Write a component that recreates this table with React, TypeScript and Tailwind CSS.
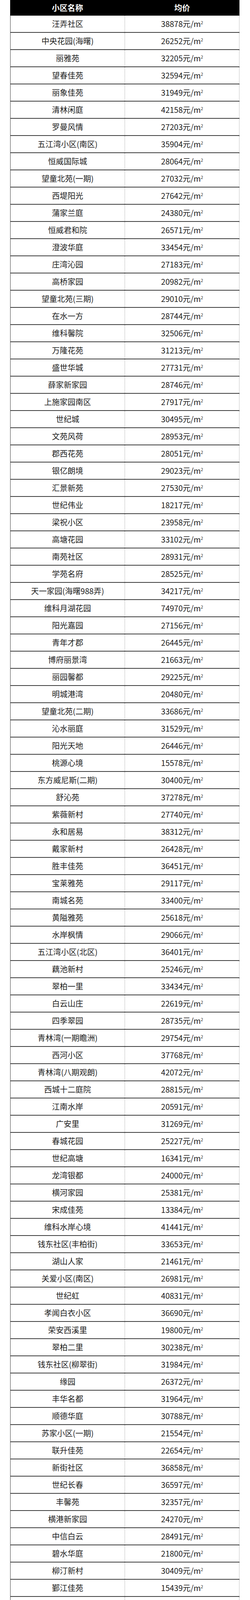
const rows: [string, number][] = [
  ["汪弄社区", 38878],
  ["中央花园(海曙)", 26252],
  ["丽雅苑", 32205],
  ["望春佳苑", 32594],
  ["丽象佳苑", 31949],
  ["清林闲庭", 42158],
  ["罗曼风情", 27203],
  ["五江湾小区(南区)", 35904],
  ["恒威国际城", 28064],
  ["望童北苑(一期)", 27032],
  ["西堤阳光", 27642],
  ["蒲家兰庭", 24380],
  ["恒威君和院", 26571],
  ["澄波华庭", 33454],
  ["庄湾沁园", 27183],
  ["高桥家园", 20982],
  ["望童北苑(三期)", 29010],
  ["在水一方", 28744],
  ["维科馨院", 32506],
  ["万隆花苑", 31213],
  ["盛世华城", 27731],
  ["薛家新家园", 28746],
  ["上施家园南区", 27917],
  ["世纪城", 30495],
  ["文苑风荷", 28953],
  ["郡西花苑", 28051],
  ["银亿朗境", 29023],
  ["汇景新苑", 27530],
  ["世纪伟业", 18217],
  ["梁祝小区", 23958],
  ["高塘花园", 33102],
  ["南苑社区", 28931],
  ["学苑名府", 28525],
  ["天一家园(海曙988弄)", 34217],
  ["维科月湖花园", 74970],
  ["阳光嘉园", 27156],
  ["青年才郡", 26445],
  ["博府丽景湾", 21663],
  ["丽园馨都", 29225],
  ["明城港湾", 20480],
  ["望童北苑(二期)", 33686],
  ["沁水丽庭", 31529],
  ["阳光天地", 26446],
  ["桃源心境", 15578],
  ["东方威尼斯(二期)", 30400],
  ["舒沁苑", 37278],
  ["紫薇新村", 27740],
  ["永和居易", 38312],
  ["戴家新村", 26428],
  ["胜丰佳苑", 36451],
  ["宝莱雅苑", 29117],
  ["南城名苑", 33400],
  ["黄隘雅苑", 25618],
  ["水岸枫情", 29066],
  ["五江湾小区(北区)", 36401],
  ["藕池新村", 25246],
  ["翠柏一里", 33434],
  ["白云山庄", 22619],
  ["四季翠园", 28735],
  ["青林湾(一期瞻洲)", 29754],
  ["西河小区", 37768],
  ["青林湾(八期观朗)", 42072],
  ["西城十二庭院", 28815],
  ["江南水岸", 20591],
  ["广安里", 31269],
  ["春城花园", 25227],
  ["世纪高塘", 16341],
  ["龙湾银都", 24000],
  ["横河家园", 25381],
  ["宋成佳苑", 13384],
  ["维科水岸心境", 41441],
  ["钱东社区(丰柏街)", 33653],
  ["湖山人家", 21461],
  ["关爱小区(南区)", 26981],
  ["世纪虹", 40831],
  ["孝闻白衣小区", 36690],
  ["荣安西溪里", 19800],
  ["翠柏二里", 30238],
  ["钱东社区(柳翠街)", 31984],
  ["缘园", 26372],
  ["丰华名都", 31964],
  ["顺德华庭", 30788],
  ["苏家小区(一期)", 21554],
  ["联升佳苑", 22654],
  ["新街社区", 36858],
  ["世纪长春", 36597],
  ["丰馨苑", 32357],
  ["横港新家园", 24270],
  ["中信白云", 28491],
  ["碧水华庭", 21800],
  ["柳汀新村", 30409],
  ["鄞江佳苑", 15439],
  ["柳馨花园", 27722],
  ["西湾小区(48弄)", 33015],
  ["西河花园", 28999],
  ["荣安佳境", 28724],
  ["菱池小区", 35106],
  ["盛世郦都(北区)", 22233],
  ["葑盛昉", 26724],
  ["青林湾(六期观瀚)", 40691],
];

export default function App() {
  return (
    <div className="h-[4441px] overflow-hidden bg-white font-['Noto_Sans_CJK_SC',sans-serif] leading-none">
      <div className="ml-[26px] w-[587px]">
        <div className="flex h-[40px] bg-black text-[20px] font-bold text-white">
          <div className="flex w-1/2 items-center justify-center">小区名称</div>
          <div className="flex w-1/2 items-center justify-center">均价</div>
        </div>
        {rows.map(([name, price], i) => (
          <div
            key={i}
            className="box-border flex h-[44px] overflow-hidden border-b-2 border-l border-[#3c3c3c] text-[20px] text-[#1c1c1c]"
          >
            <div className="flex w-1/2 items-center justify-center border-r border-dotted border-[#888]">
              {name}
            </div>
            <div className="flex w-1/2 items-center justify-center border-r border-dotted border-[#888]">
              <span className="whitespace-nowrap">
                {price}元/m<span className="relative -top-[7px] text-[10px]">2</span>
              </span>
            </div>
          </div>
        ))}
      </div>
    </div>
  );
}
